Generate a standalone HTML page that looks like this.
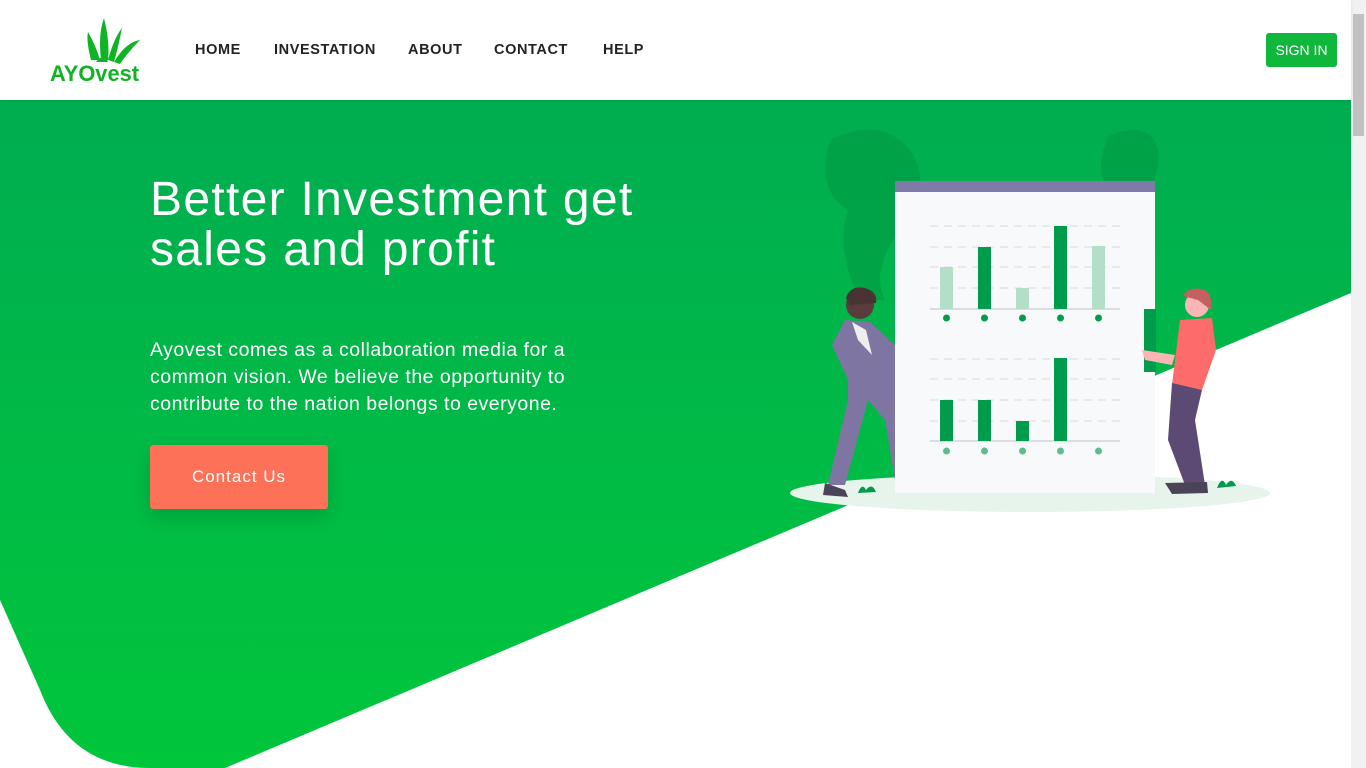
<!DOCTYPE html>
<html><head><meta charset="utf-8"><style>
*{margin:0;padding:0;box-sizing:border-box}
body{width:1366px;height:768px;overflow:hidden;font-family:"Liberation Sans",sans-serif;background:#fff;position:relative}
.hdr{position:absolute;left:0;top:0;width:1351px;height:100px;background:#fff;z-index:3;box-shadow:0 1px 4px rgba(0,0,0,.08)}
.nav{position:absolute;top:42px;font-size:14.5px;letter-spacing:.6px;color:#222;font-weight:600}
.sign{position:absolute;left:1266px;top:33px;width:71px;height:34px;background:#0fb83b;color:#fff;font-size:14px;border-radius:3px;text-align:center;line-height:34px}
.sb{position:absolute;left:1351px;top:0;width:15px;height:768px;background:#f1f1f1}
.sb i{position:absolute;left:2px;top:14px;width:11px;height:122px;background:#c1c1c1}
h1{position:absolute;left:150px;top:175px;color:#fff;font-size:48px;font-weight:500;line-height:50px;letter-spacing:1.3px;white-space:nowrap}
p{position:absolute;left:150px;top:337px;color:#fff;font-size:19.5px;line-height:27px;width:480px;letter-spacing:.5px}
.btn{position:absolute;left:150px;top:445px;width:178px;height:64px;background:#fd7159;color:#fff;border-radius:3px;font-size:17px;letter-spacing:1px;text-align:center;line-height:64px;box-shadow:0 8px 18px rgba(0,0,0,.15)}
</style></head><body>
<svg width="1351" height="768" style="position:absolute;left:0;top:0">
<defs><linearGradient id="g" x1="0" y1="0" x2="0" y2="1"><stop offset="0" stop-color="#00ad51"/><stop offset="1" stop-color="#00c63b"/></linearGradient></defs>
<path d="M0 100 H1351 V293 L225 768 H150 Q70 768 40 690 L0 600 Z" fill="url(#g)"/>
<path d="M830 140 Q880 115 910 150 Q935 185 900 230 Q870 270 885 300 L860 300 Q835 250 848 210 Q815 190 830 140Z" fill="#009a45" opacity=".6"/>
<path d="M1110 135 Q1150 120 1158 150 Q1160 175 1150 185 L1105 185 Q1095 160 1110 135Z" fill="#009a45" opacity=".6"/>
<ellipse cx="1030" cy="493" rx="240" ry="19" fill="#e6f4ec"/>
<rect x="895" y="181" width="260" height="312" fill="#f8f9fb"/>
<rect x="895" y="181" width="260" height="11" fill="#7f7aa8"/>
<g stroke="#e3e3ea" stroke-width="1.5" stroke-dasharray="8 6"><line x1="930" y1="226" x2="1120" y2="226"/><line x1="930" y1="247" x2="1120" y2="247"/><line x1="930" y1="267" x2="1120" y2="267"/><line x1="930" y1="288" x2="1120" y2="288"/><line x1="930" y1="359" x2="1120" y2="359"/><line x1="930" y1="379" x2="1120" y2="379"/><line x1="930" y1="400" x2="1120" y2="400"/><line x1="930" y1="421" x2="1120" y2="421"/></g>
<line x1="930" y1="309" x2="1120" y2="309" stroke="#dcdce4" stroke-width="2"/>
<line x1="930" y1="441" x2="1120" y2="441" stroke="#dcdce4" stroke-width="2"/>
<g fill="#b3dfc8"><rect x="940" y="267" width="13" height="42"/><rect x="1016" y="288" width="13" height="21"/><rect x="1092" y="246" width="13" height="63"/></g>
<g fill="#009c4c"><rect x="978" y="247" width="13" height="62"/><rect x="1054" y="226" width="13" height="83"/><rect x="940" y="400" width="13" height="41"/><rect x="978" y="400" width="13" height="41"/><rect x="1016" y="421" width="13" height="20"/><rect x="1054" y="358" width="13" height="83"/><rect x="1144" y="309" width="12" height="63"/></g>
<g fill="#009c4c"><circle cx="946.5" cy="318" r="3.5"/><circle cx="984.5" cy="318" r="3.5"/><circle cx="1022.5" cy="318" r="3.5"/><circle cx="1060.5" cy="318" r="3.5"/><circle cx="1098.5" cy="318" r="3.5"/></g>
<g fill="#5cbf8a"><circle cx="946.5" cy="451" r="3.5"/><circle cx="984.5" cy="451" r="3.5"/><circle cx="1022.5" cy="451" r="3.5"/><circle cx="1060.5" cy="451" r="3.5"/><circle cx="1098.5" cy="451" r="3.5"/></g>
<path d="M845 320 L870 322 L895 345 L895 480 L885 420 L868 400 L845 485 L828 485 L848 400 L848 380 L832 345 Z" fill="#7f75a3"/>
<circle cx="860" cy="305" r="14" fill="#5a3c3c"/><path d="M846 298 Q850 285 865 288 Q878 292 876 303 L850 305Z" fill="#4a3333"/>
<path d="M852 322 L866 330 L872 355 L858 340Z" fill="#eee"/>
<path d="M825 483 L845 490 L848 497 L823 495Z" fill="#4b4458"/>
<circle cx="1197" cy="305" r="12" fill="#fcb5b5"/><path d="M1183 296 Q1190 285 1205 290 Q1213 296 1211 310 L1198 300Z" fill="#c66060"/>
<path d="M1180 320 L1212 318 L1216 350 L1202 390 L1172 385 Z" fill="#fd6b6b"/>
<path d="M1142 350 L1175 355 L1172 365 L1145 360Z" fill="#fcb5b5"/>
<path d="M1172 383 L1202 390 L1195 420 L1205 485 L1185 485 L1168 440 Z" fill="#5c4a74"/>
<path d="M1165 483 L1207 482 L1208 493 L1172 494Z" fill="#4b4458"/>
<path d="M1217 488 Q1222 475 1226 485 Q1232 476 1236 486Z" fill="#009c4c"/>
<path d="M858 493 Q862 482 866 490 Q872 482 876 492Z" fill="#009c4c"/>
</svg>
<div class="hdr">
<svg width="100" height="80" style="position:absolute;left:48px;top:10px">
<path d="M43 50 Q38 30 40 22 Q48 36 52 50Z M53 50 Q50 24 56 8 Q62 32 60 50Z M60 50 Q66 28 74 18 Q70 38 66 52Z M66 52 Q78 32 92 30 Q80 42 72 54Z M48 52 Q56 42 60 52Z" fill="#0fb324"/>
<text x="2" y="71" font-family="Liberation Sans" font-weight="bold" font-size="22" fill="#0fb324" textLength="89" lengthAdjust="spacingAndGlyphs">AYOvest</text>
</svg>
<div class="nav" style="left:195px">HOME</div>
<div class="nav" style="left:274px">INVESTATION</div>
<div class="nav" style="left:408px">ABOUT</div>
<div class="nav" style="left:494px">CONTACT</div>
<div class="nav" style="left:603px">HELP</div>
<div class="sign">SIGN IN</div>
</div>
<h1>Better Investment get<br>sales and profit</h1>
<p>Ayovest comes as a collaboration media for a common vision. We believe the opportunity to contribute to the nation belongs to everyone.</p>
<div class="btn">Contact Us</div>
<div class="sb"><i></i></div>
</body></html>
